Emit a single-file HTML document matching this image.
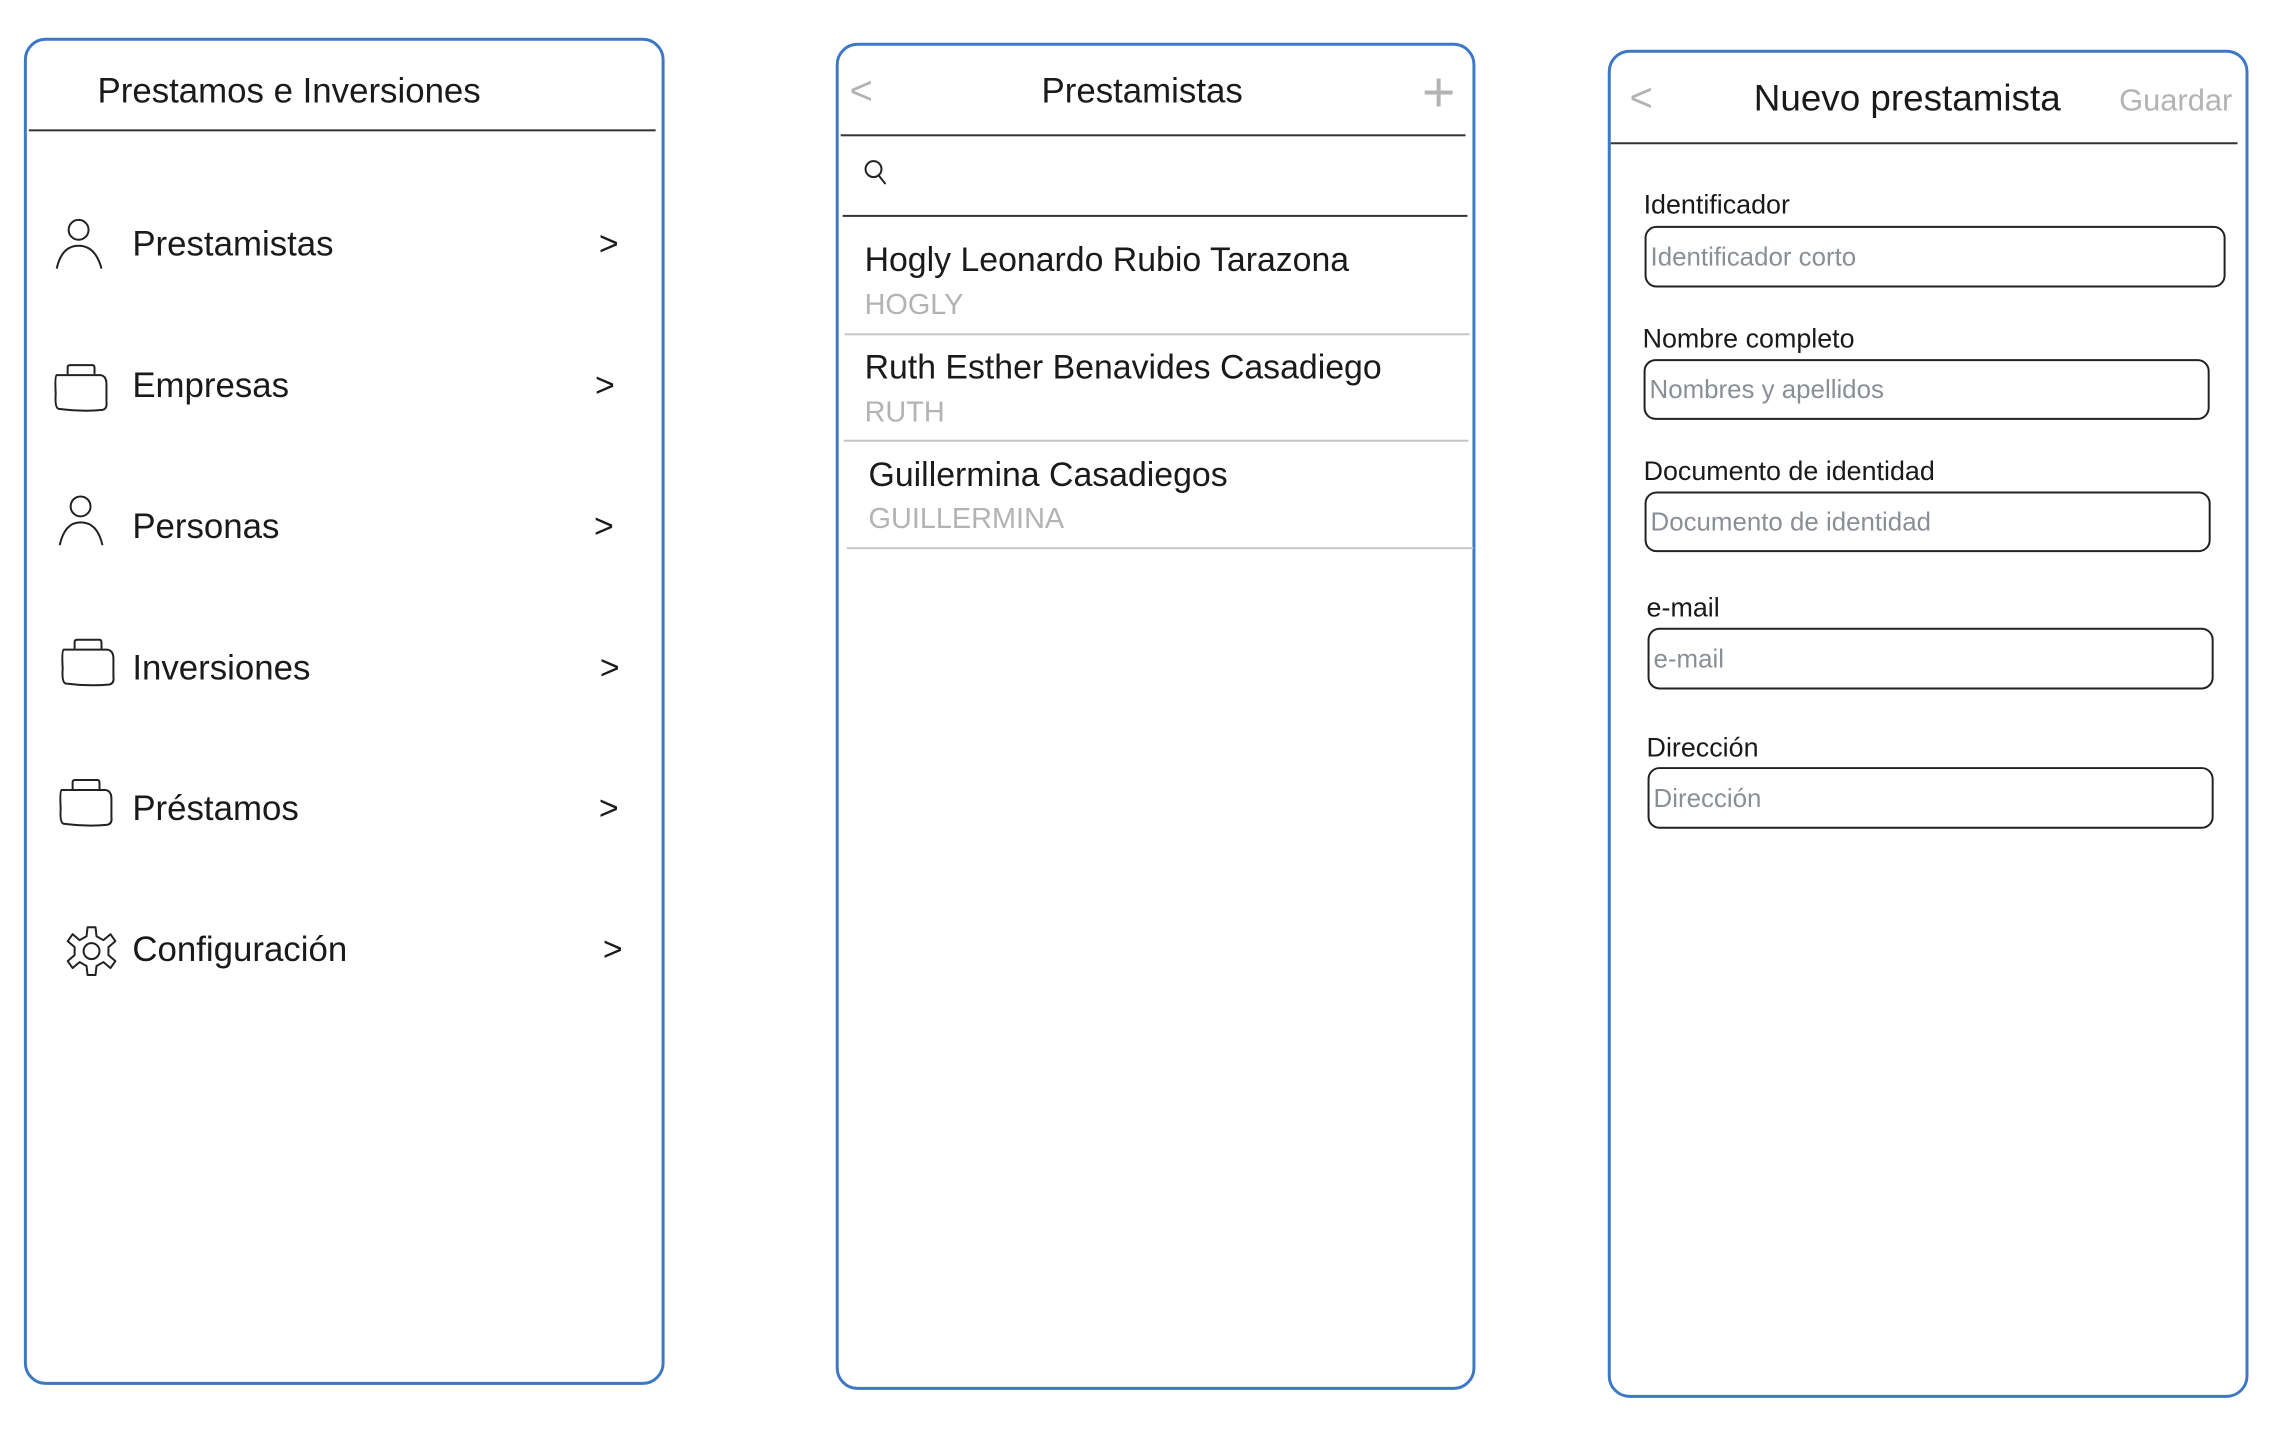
<!DOCTYPE html>
<html><head><meta charset="utf-8">
<style>
*{margin:0;padding:0;box-sizing:border-box}
body{width:2282px;height:1426px;background:#fff;position:relative;overflow:hidden;font-family:"Liberation Sans",sans-serif;color:#1a1a1a}
#w{position:absolute;left:0;top:0;width:2300px;height:1440px;transform:scale(0.9949);transform-origin:0 0}
.p{position:absolute;border:3px solid #3d78c6;border-radius:22px}
.a{position:absolute;white-space:nowrap}
.l{position:absolute;height:2px;background:#333}
.g{position:absolute;height:2px;background:#c4c4c4}
.it{font-size:35px;transform:translateY(-50%)}
.ch{font-size:34px;transform:translateY(-50%)}
.nm{font-size:34px;transform:translateY(-50%)}
.sb{font-size:29px;color:#b3b3b3;transform:translateY(-50%)}
.lb{font-size:27px;transform:translateY(-50%)}
.in{position:absolute;border:2px solid #222;border-radius:12px;font-size:26px;color:#8a8f96;padding-left:4px;display:flex;align-items:center}
svg{position:absolute;overflow:visible}
</style></head><body><div id="w">

<!-- Panel 1 -->
<div class="p" style="left:24px;top:38px;width:644px;height:1354px"></div>
<div class="a it" style="left:98px;top:92px;font-size:35px">Prestamos e Inversiones</div>
<div class="l" style="left:29px;top:130px;width:630px"></div>

<svg style="left:54px;top:220px" width="50" height="52" fill="none" stroke="#222" stroke-width="2"><ellipse cx="25" cy="11" rx="10" ry="10"/><path d="M3 50 Q8 27 25 27 Q42 27 48 50"/></svg>
<div class="a it" style="left:133px;top:246px">Prestamistas</div>
<div class="a ch" style="left:602px;top:246px">&gt;</div>

<svg style="left:53px;top:366px" width="56" height="48" fill="none" stroke="#222" stroke-width="2"><path d="M15 10 V3 Q15 1 18 1 H40 Q42 1 42 4 V10"/><path d="M4 11 Q2 12 3 30 Q2 44 6 45 Q30 48 50 46 Q55 45 54 38 V20 Q54 12 48 11 Z"/></svg>
<div class="a it" style="left:133px;top:388px">Empresas</div>
<div class="a ch" style="left:598px;top:388px">&gt;</div>

<svg style="left:57px;top:498px" width="50" height="52" fill="none" stroke="#222" stroke-width="2"><ellipse cx="24" cy="11" rx="10" ry="10"/><path d="M3 50 Q8 27 24 27 Q41 27 46 50"/></svg>
<div class="a it" style="left:133px;top:530px">Personas</div>
<div class="a ch" style="left:597px;top:530px">&gt;</div>

<svg style="left:60px;top:642px" width="56" height="48" fill="none" stroke="#222" stroke-width="2"><path d="M15 10 V3 Q15 1 18 1 H40 Q42 1 42 4 V10"/><path d="M4 11 Q2 12 3 30 Q2 44 6 45 Q30 48 50 46 Q55 45 54 38 V20 Q54 12 48 11 Z"/></svg>
<div class="a it" style="left:133px;top:672px">Inversiones</div>
<div class="a ch" style="left:603px;top:672px">&gt;</div>

<svg style="left:58px;top:783px" width="56" height="48" fill="none" stroke="#222" stroke-width="2"><path d="M15 10 V3 Q15 1 18 1 H40 Q42 1 42 4 V10"/><path d="M4 11 Q2 12 3 30 Q2 44 6 45 Q30 48 50 46 Q55 45 54 38 V20 Q54 12 48 11 Z"/></svg>
<div class="a it" style="left:133px;top:813px">Préstamos</div>
<div class="a ch" style="left:602px;top:813px">&gt;</div>

<svg style="left:65px;top:930px" width="54" height="52" viewBox="-27 -26 54 52" fill="none" stroke="#222" stroke-width="2"><circle r="8"/><path d="M-5 -15 L-4 -24 L4 -24 L5 -15 L12 -11 L19 -17 L24 -10 L17 -4 L17 4 L24 10 L19 17 L12 11 L5 15 L4 24 L-4 24 L-5 15 L-12 11 L-19 17 L-24 10 L-17 4 L-17 -4 L-24 -10 L-19 -17 L-12 -11 Z" stroke-linejoin="round"/></svg>
<div class="a it" style="left:133px;top:955px">Configuración</div>
<div class="a ch" style="left:606px;top:955px">&gt;</div>

<!-- Panel 2 -->
<div class="p" style="left:840px;top:43px;width:643px;height:1354px"></div>
<div class="a" style="left:854px;top:92px;transform:translateY(-50%);font-size:40px;color:#b3b3b3">&lt;</div>
<div class="a it" style="left:1148px;top:92px;transform:translate(-50%,-50%)">Prestamistas</div>
<svg style="left:1432px;top:79px" width="28" height="28" stroke="#b3b3b3" stroke-width="4"><path d="M14 0 V28 M0 14 H28"/></svg>
<div class="l" style="left:845px;top:135px;width:628px"></div>
<svg style="left:868px;top:160px" width="28" height="28" fill="none" stroke="#222" stroke-width="2"><circle cx="10" cy="10" r="8"/><path d="M15 16 L22 25"/></svg>
<div class="l" style="left:847px;top:216px;width:628px"></div>

<div class="a nm" style="left:869px;top:262px">Hogly Leonardo Rubio Tarazona</div>
<div class="a sb" style="left:869px;top:307px">HOGLY</div>
<div class="g" style="left:849px;top:335px;width:628px"></div>
<div class="a nm" style="left:869px;top:370px">Ruth Esther Benavides Casadiego</div>
<div class="a sb" style="left:869px;top:415px">RUTH</div>
<div class="g" style="left:848px;top:442px;width:628px"></div>
<div class="a nm" style="left:873px;top:478px">Guillermina Casadiegos</div>
<div class="a sb" style="left:873px;top:522px">GUILLERMINA</div>
<div class="g" style="left:851px;top:550px;width:630px"></div>

<!-- Panel 3 -->
<div class="p" style="left:1616px;top:50px;width:644px;height:1355px"></div>
<div class="a" style="left:1638px;top:99px;transform:translateY(-50%);font-size:40px;color:#b3b3b3">&lt;</div>
<div class="a" style="left:1917px;top:99px;transform:translate(-50%,-50%);font-size:37px">Nuevo prestamista</div>
<div class="a" style="left:2130px;top:101px;transform:translateY(-50%);font-size:31px;color:#b3b3b3">Guardar</div>
<div class="l" style="left:1619px;top:143px;width:630px"></div>

<div class="a lb" style="left:1652px;top:206px">Identificador</div>
<div class="in" style="left:1653px;top:227px;width:584px;height:62px">Identificador corto</div>
<div class="a lb" style="left:1651px;top:341px">Nombre completo</div>
<div class="in" style="left:1652px;top:361px;width:569px;height:61px">Nombres y apellidos</div>
<div class="a lb" style="left:1652px;top:474px">Documento de identidad</div>
<div class="in" style="left:1653px;top:494px;width:569px;height:61px">Documento de identidad</div>
<div class="a lb" style="left:1655px;top:611px">e-mail</div>
<div class="in" style="left:1656px;top:631px;width:569px;height:62px">e-mail</div>
<div class="a lb" style="left:1655px;top:752px">Dirección</div>
<div class="in" style="left:1656px;top:771px;width:569px;height:62px">Dirección</div>

</div></body></html>
